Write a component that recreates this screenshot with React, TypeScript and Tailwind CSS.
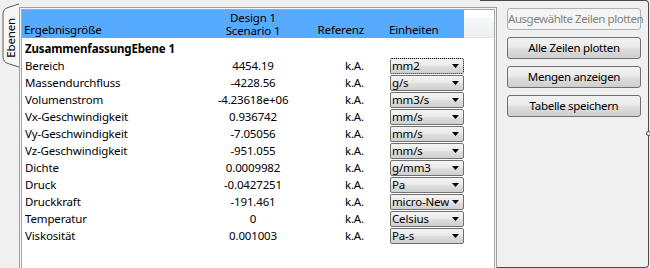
import React from "react";

const rows: Array<[string, string, string]> = [
	["Bereich", "4454.19", "mm2"],
	["Massendurchfluss", "-4228.56", "g/s"],
	["Volumenstrom", "-4.23618e+06", "mm3/s"],
	["Vx-Geschwindigkeit", "0.936742", "mm/s"],
	["Vy-Geschwindigkeit", "-7.05056", "mm/s"],
	["Vz-Geschwindigkeit", "-951.055", "mm/s"],
	["Dichte", "0.0009982", "g/mm3"],
	["Druck", "-0.0427251", "Pa"],
	["Druckkraft", "-191.461", "micro-Newton"],
	["Temperatur", "0", "Celsius"],
	["Viskosität", "0.001003", "Pa-s"],
];

const buttons = ["Ausgewählte Zeilen plotten", "Alle Zeilen plotten", "Mengen anzeigen", "Tabelle speichern"];

function UnitSelect({ value, focused }: { value: string; focused?: boolean }) {
	return (
		<div
			className={`flex h-[16px] w-[74px] items-center rounded-[2px] border bg-[linear-gradient(to_bottom,#f3f3f3_0%,#ebebeb_45%,#dddddd_55%,#d0d0d0_100%)] ${
				focused ? "border-dotted border-black" : "border-[#707070]"
			}`}
		>
			<span className="flex h-full flex-1 items-center overflow-hidden whitespace-nowrap pl-px leading-[14px]">{value}</span>
			<svg width="14" height="14" viewBox="0 0 14 14" className="shrink-0">
				<path d="M3 5h7l-3.5 4z" fill="#000" />
			</svg>
		</div>
	);
}

function SideTab() {
	return (
		<div className="relative h-[72px] w-[19px] shrink-0">
			<svg width="19" height="72" viewBox="0 0 19 72" className="block">
				<path d="M19 4 L8 7.5 Q3 9 3 14 L3 57 Q3 62 8 63.5 L19 67" fill="#f6f6f6" stroke="#5a5a5a" strokeWidth="1" />
			</svg>
			<div className="absolute left-[3px] top-[18px] flex h-[40px] w-[16px] items-center justify-center">
				<span className="rotate-180 text-[11.5px] leading-none [writing-mode:vertical-rl]">Ebenen</span>
			</div>
		</div>
	);
}

export default function App() {
	return (
		<div className="relative flex h-[268px] w-[650px] overflow-hidden bg-[#f0f0f0] font-['Noto_Sans',sans-serif] text-[11.5px] tracking-[-0.15px] text-black">
			<SideTab />

			{/* table panel */}
			<div className="relative z-10 mt-[7px] flex h-[270px] w-[478px] shrink-0 border-x border-t border-[#a0a0a0] bg-[#f4f4f4] px-px pt-px">
				<div className="flex flex-1 flex-col border-x border-t border-[#a8a8a8] bg-white">
					<div className="flex h-[28px] shrink-0">
						<div className="flex w-[442px] bg-[#56aaff] leading-[13px]">
							<div className="flex w-[178px] items-end pb-[2px] pl-[2px]">Ergebnisgröße</div>
							<div className="flex w-[106px] flex-col items-center pt-[1px]">
								<span>Design 1</span>
								<span>Scenario 1</span>
							</div>
							<div className="flex w-[62px] items-end justify-end pb-[2px] pr-[4px]">Referenz</div>
							<div className="flex w-[96px] items-end pb-[2px] pl-[21px]">Einheiten</div>
						</div>
						<div className="flex-1 border-b border-[#e3e6ea] bg-[linear-gradient(to_bottom,#ffffff_0,#ffffff_8px,#f6f7f8_8px,#eef0f2_100%)]" />
					</div>

					<div className="mt-[2px] flex h-[17px] items-center pl-[3px] font-bold">ZusammenfassungEbene 1</div>

					{rows.map(([name, val, unit], i) => (
						<div key={name} className="flex h-[17px] items-center">
							<div className="w-[178px] pl-[3px]">{name}</div>
							<div className="w-[106px] text-center">{val}</div>
							<div className="w-[62px] pr-[4px] text-right">k.A.</div>
							<div className="w-[96px] pl-[22px]">
								<UnitSelect value={unit} focused={i === 0} />
							</div>
						</div>
					))}
				</div>
			</div>

			{/* button panel */}
			<div className="relative -ml-[17px] flex h-[268px] w-[169px] shrink-0 flex-col gap-[7px] rounded-r-[4px] border-y border-r border-[#4a4a4a] pl-[27px] pt-[7px]">
				{buttons.map((b, i) => (
					<button
						key={b}
						disabled={i === 0}
						className={`h-[22px] w-[134px] whitespace-nowrap rounded-[3px] border text-[11.5px] leading-none ${
							i === 0
								? "border-[#adb2b5] bg-[#f4f4f4] tracking-[-0.45px] text-[#838383]"
								: "border-[#707070] bg-[linear-gradient(to_bottom,#f2f2f2_0%,#ebebeb_45%,#dddddd_55%,#cfcfcf_100%)] tracking-[-0.3px] text-black"
						}`}
					>
						{b}
					</button>
				))}
				<span className="absolute -right-[3px] top-[130px] h-[5px] w-[5px] rounded-full border border-[#4a4a4a] bg-white" />
			</div>
		</div>
	);
}
